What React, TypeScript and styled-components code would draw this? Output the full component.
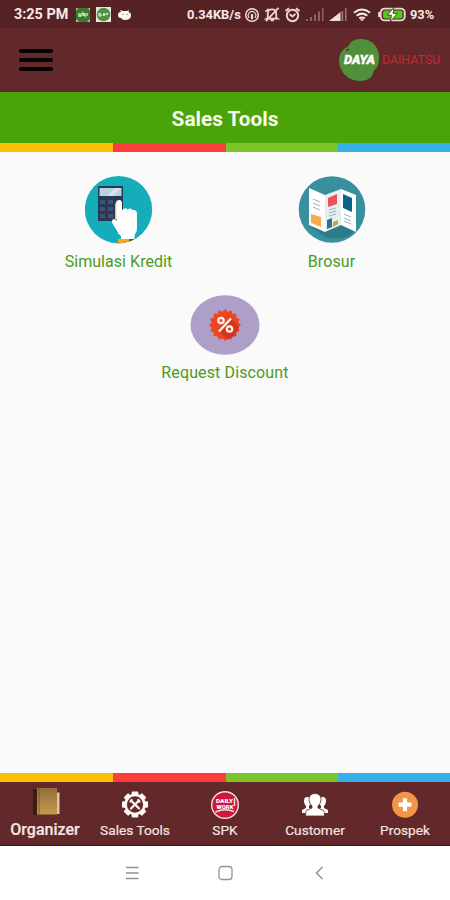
import React from 'react';
import styled, { createGlobalStyle } from 'styled-components';

const GlobalStyle = createGlobalStyle`
  *, *::before, *::after { box-sizing: border-box; }
  body { margin: 0; font-family: Roboto, "Liberation Sans", sans-serif; }
`;

const Screen = styled.div`
  display: flex;
  flex-direction: column;
  width: 450px;
  height: 900px;
  overflow: hidden;
  background: #fafafa;
`;

const StatusBar = styled.header`
  display: flex;
  align-items: center;
  height: 28px;
  padding: 1px 14px 0 14px;
  background: #572224;
  color: #f6e9e6;
`;

const StatusText = styled.span<{ $width: number; $size?: number }>`
  flex: none;
  width: ${(p) => p.$width}px;
  font-size: ${(p) => p.$size ?? 13}px;
  font-weight: 700;
  line-height: 27px;
  white-space: nowrap;
`;

const StatusIcon = styled.svg<{ $gap: number }>`
  flex: none;
  margin-left: ${(p) => p.$gap}px;
`;

const NetworkSpeed = styled(StatusText)`
  margin-left: 55px;
`;

const BatteryLevel = styled(StatusText)`
  margin-left: 4px;
`;

const AppBar = styled.div`
  display: flex;
  align-items: center;
  justify-content: space-between;
  height: 64px;
  padding: 0 9px 0 19px;
  background: #632829;
`;

const MenuButton = styled.button`
  display: flex;
  flex-direction: column;
  gap: 5px;
  width: 34px;
  padding: 0;
  border: 0;
  background: none;
`;

const MenuLine = styled.span`
  height: 4px;
  border-radius: 2px;
  background: #050303;
`;

const TitleBar = styled.h1`
  display: flex;
  align-items: center;
  justify-content: center;
  height: 51px;
  margin: 0;
  padding-top: 2px;
  background: #49a309;
  color: #f7fbe9;
  font-size: 20.8px;
  font-weight: 700;
`;

const Stripe = styled.div`
  display: grid;
  grid-template-columns: 113px 113px 112px 112px;
  flex: none;
  height: 9px;
`;

const StripePart = styled.div<{ $color: string }>`
  background: ${(p) => p.$color};
`;

const Tools = styled.main`
  flex: 1;
  padding: 24px 12px 0;
`;

const ToolRow = styled.div<{ $top?: number }>`
  display: flex;
  justify-content: space-around;
  margin-top: ${(p) => p.$top ?? 0}px;
`;

const Tool = styled.div`
  display: flex;
  flex-direction: column;
  align-items: center;
  width: 213px;
`;

const ToolLabel = styled.span<{ $spacing: number }>`
  margin-top: 8px;
  color: #4b9b1c;
  font-size: 16px;
  line-height: 20px;
  letter-spacing: ${(p) => p.$spacing}px;
  white-space: nowrap;
`;

const TabBar = styled.nav`
  display: grid;
  grid-template-columns: repeat(5, 90px);
  height: 64px;
  border-bottom: 1px solid #3d1416;
  background: #632829;
`;

const Tab = styled.div`
  display: flex;
  flex-direction: column;
  align-items: center;
  padding-top: 5px;
`;

const TabLabel = styled.span<{ $large?: boolean }>`
  margin-top: ${(p) => (p.$large ? 3 : 1)}px;
  color: #f3e5e2;
  font-size: ${(p) => (p.$large ? 16 : 13.7)}px;
  font-weight: ${(p) => (p.$large ? 500 : 400)};
  line-height: 20px;
  white-space: nowrap;
  -webkit-text-stroke: 0.2px #f3e5e2;
`;

const SystemNav = styled.footer`
  display: flex;
  align-items: center;
  justify-content: center;
  gap: 78px;
  height: 54px;
  padding-left: 2px;
  background: #fff;
`;

const stripeColors = ['#fec007', '#fb3d3d', '#7cc42c', '#37b0ea'];

const ColorStripe = () => (
  <Stripe>
    {stripeColors.map((c) => (
      <StripePart key={c} $color={c} />
    ))}
  </Stripe>
);

const StatusIcons = () => (
  <>
    <StatusIcon $gap={0} width="16" height="16" viewBox="0 0 17 16" fill="none" stroke="#ead8d6" strokeWidth="1.6">
      <circle cx="8.5" cy="8" r="6.7" />
      <path d="M5.5 11a4 4 0 1 1 6 0" strokeWidth="1.3" />
      <path d="M8.5 7v5.5" strokeWidth="2.4" />
    </StatusIcon>
    <StatusIcon $gap={4} width="16" height="15" viewBox="0 0 17 16" fill="none" stroke="#ead8d6" strokeWidth="1.9">
      <path d="M4 11.5V7q0-4.5 4.5-4.5T13 7v4.5l1.5 1H2.5zM7 14.3h3.5M15.5 1 2 15" />
      <path d="M1.5 5 5 2" />
    </StatusIcon>
    <StatusIcon $gap={4} width="17" height="16" viewBox="0 0 17 16" fill="none" stroke="#ead8d6" strokeWidth="1.9">
      <circle cx="8.5" cy="8.5" r="5.7" />
      <path d="M1.5 4 5 1.2M12 1.2 15.5 4M5.7 7.2 8.5 9.5l3-2.6" />
    </StatusIcon>
    <StatusIcon $gap={5} width="18" height="14" viewBox="0 0 18 14" fill="#8b6263">
      <path d="M0 11h2v2H0zM4 9h2v4H4zM8 6.5h2V13H8zM12 3.5h2V13h-2zM16 0h1.5v13H16z" />
    </StatusIcon>
    <StatusIcon $gap={5} width="18" height="14" viewBox="0 0 18 14">
      <path d="M0 13 11.5 4v9z" fill="#efdfdc" />
      <path d="M12.5 3h1.7v10h-1.7zM16 0h1.5v13H16z" fill="#9d7778" />
    </StatusIcon>
    <StatusIcon $gap={6} width="18" height="14" viewBox="0 0 18 14" fill="none" stroke="#f6e9e6" strokeWidth="2">
      <path d="M1 4.7q8-6.3 16 0M3.7 7.7q5.3-4.2 10.6 0M6.3 10.4q2.7-2 5.4 0" />
      <path d="m6.8 11.2 2.2 2 2.2-2z" fill="#f6e9e6" stroke="none" />
    </StatusIcon>
    <StatusIcon $gap={7} width="28" height="15" viewBox="0 0 28 15">
      <rect x="2.7" y="1.6" width="24" height="11.8" rx="4" fill="#572224" stroke="#ead8d6" strokeWidth="1.9" />
      <path d="M1.2 5v5" stroke="#ead8d6" strokeWidth="2.2" />
      <rect x="5" y="3.6" width="19.5" height="7.8" rx="2" fill="#4fca18" />
      <path d="M16 0 9.5 8.2h4L12.2 15l7-8.6H15z" fill="#fff" stroke="#572224" strokeWidth=".8" />
    </StatusIcon>
  </>
);

const BrandLogo = () => (
  <svg width="103" height="44" viewBox="338 38 103 44">
    <path d="M350.5 42.5Q354 39 361 39q10 0 15 7.500 3 5 3 11.500 0 9-5 12.500-2 10.500-13 10.500-10 0-16-6-6-6-6-15 0-7 6-12 3-.5 5.500-5.500z" fill="#51903a" />
    <path d="m345.500 51.500 1.500-2.500q1.500-1 2.500 0-.5 1.500-4 2.500z" fill="#632829" />
    <text x="344" y="63.500" fill="#fff" stroke="#fff" strokeWidth=".3" fontFamily="Roboto, sans-serif" fontSize="12" fontWeight="900" fontStyle="italic" textLength="31" lengthAdjust="spacingAndGlyphs">DAYA</text>
    <text x="382" y="63.500" fill="#cf2434" fontFamily="Roboto, sans-serif" fontSize="12" fontWeight="400" textLength="58" lengthAdjust="spacingAndGlyphs">DAIHATSU</text>
  </svg>
);

const CreditIcon = () => (
  <svg width="68" height="68" viewBox="0 0 68 68">
    <defs><clipPath id="creditDisc"><circle cx="33.5" cy="33.7" r="33.7" /></clipPath></defs>
    <circle cx="33.5" cy="33.7" r="33.7" fill="#14adb9" />
    <path d="M13 10h25v35H13z" fill="#273a55" />
    <path d="M14.500 12h22v8h-22z" fill="#b7d2e3" />
    <path d="m22 20 8-8h6l-8 8z" fill="#d4e5ed" />
    <path d="M15 24h5v4h-5zM23 24h5v4h-5zM31 24h5v4h-5zM15 31h5v4h-5zM23 31h5v4h-5zM15 38h5v4h-5zM23 38h5v4h-5z" fill="#405471" />
    <path d="M30 29q1-5 4-4v18h-4z" fill="#f2cc83" />
    <path d="M31.500 27.500q0-3.500 2.800-3.500t2.700 3.500V34q3-3 5.500-.5 3-2 5 .5 4.500-.5 4.500 3.500V52q0 4-2 6l-1 6H36v-4q-3-2-4.500-6l-4-6.500q-1.500-4 1.500-4.500 1.500 0 2.500 2z" fill="#fffefe" />
    <path d="M42.300 34v4m5-3.500v4" stroke="#dcebed" strokeWidth=".8" />
    <g clipPath="url(#creditDisc)">
      <path d="M33 63h19v6H33z" fill="#f5a52c" />
      <path d="M44 63h5v5h-5z" fill="#5f5145" />
    </g>
  </svg>
);

const BrochureIcon = () => (
  <svg width="68" height="68" viewBox="0 0 68 68">
    <circle cx="34" cy="33.500" r="33.300" fill="#38909f" />
    <path d="m12 50 15 11q22 5 31-8V20z" fill="#2b7c8b" />
    <path d="m11 12 16 7v37l-16-7z" fill="#fff" />
    <path d="m27 19 16-6v36l-16 7z" fill="#e4eff3" />
    <path d="m43 13 15 6v37l-15-7z" fill="#fff" />
    <path d="m13 38 10 3v10l-10-4z" fill="#fba944" />
    <path d="m30 22 9-4v10l-9 3z" fill="#eb5258" />
    <path d="m45 18 9 4v14l-9-4z" fill="#07638a" />
    <path d="m29 44 5-2v9l-5 2z" fill="#29758b" />
    <path d="m35 46 5-2v4l-5 3z" fill="#c1aa34" />
    <path d="m15 23 7 3m-7 1 7 3m-7 1 7 3M31 34l7-2m-7 5 7-2m-7 5 7-2M46 38l7 3m-7 1 7 3m-7 0 7 3" fill="none" stroke="#a3aeba" strokeWidth="1" />
  </svg>
);

const discountSeal = Array.from({ length: 32 }, (_, i) => {
  const r = i % 2 ? 13.5 : 16;
  const a = (i * Math.PI) / 16;
  return `${35 + Math.cos(a) * r},${30 + Math.sin(a) * r}`;
}).join(' ');

const DiscountIcon = () => (
  <svg width="70" height="60" viewBox="0 0 70 60">
    <ellipse cx="35" cy="30" rx="34.5" ry="29.7" fill="#ad9fc8" />
    <polygon points={discountSeal} fill="#ee4523" />
    <path d="m42 24 7 8-4 9-8 4-7-8z" fill="#c6301b" opacity=".65" />
    <g fill="none" stroke="#fff5e7" strokeWidth="2.2">
      <circle cx="31" cy="25.500" r="2.700" />
      <circle cx="39.500" cy="34" r="2.700" />
      <path d="m29 36.500 12-13" />
    </g>
  </svg>
);

const NotebookIcon = () => (
  <svg width="30" height="30" viewBox="0 0 30 30">
    <defs><linearGradient id="leather" x1="0" y1="0" x2="0" y2="1"><stop stopColor="#927039" /><stop offset="1" stopColor="#c49a4c" /></linearGradient></defs>
    <path d="M3 2h5v26H3z" fill="#3a1d17" />
    <path d="M25 5.500h4.500V27H25z" fill="#d9c7aa" />
    <path d="M7 1h20v26.500H7z" fill="url(#leather)" />
    <path d="M9 1v26" stroke="#7c5b2d" />
  </svg>
);

const gearTeeth = Array.from({ length: 8 }, (_, i) => i * 45);

const ToolsIcon = () => (
  <svg width="30" height="32" viewBox="0 0 30 32">
    <g transform="translate(15 17.5)">
      {gearTeeth.map((angle) => (
        <rect key={angle} x="-3.3" y="-13" width="6.600" height="5" rx="1" fill="#fff8f4" transform={`rotate(${angle})`} />
      ))}
      <circle r="9.400" fill="#632829" stroke="#fff8f4" strokeWidth="2.500" />
      <path d="m-4 4 8-8M-4-4l8 8" stroke="#fff8f4" strokeWidth="2.300" strokeLinecap="round" />
      <path d="M-5.500-3q2 1 2.500-2.500M3-5.500Q3-2 5.500-3" fill="none" stroke="#fff8f4" strokeWidth="1.400" />
    </g>
  </svg>
);

const SpkIcon = () => (
  <svg width="30" height="32" viewBox="0 0 30 32">
    <circle cx="15" cy="18" r="13.3" fill="#cd1838" stroke="#eee0df" strokeWidth="1.4" />
    <path d="M5.500 25q9-4 18.500-.5M24.500 11v8" fill="none" stroke="#f5dce0" strokeWidth="1.500" />
    <g fill="#fff" fontFamily="Roboto, sans-serif" fontWeight="900" fontSize="5" textAnchor="middle">
      <text x="14.500" y="16" textLength="17" lengthAdjust="spacingAndGlyphs">DAILY</text>
      <text x="15" y="22.300" textLength="17" lengthAdjust="spacingAndGlyphs">WORK</text>
    </g>
  </svg>
);

const CustomerIcon = () => (
  <svg width="30" height="32" viewBox="0 0 30 32" fill="#fff">
    <path d="M7 10q4 0 4 4 0 3-2 5v2l2 1-3 4H2v-3l4-2v-2q-2-2-2-5 0-4 3-4M23 10q-4 0-4 4 0 3 2 5v2l-2 1 3 4h6v-3l-4-2v-2q2-2 2-5 0-4-3-4" />
    <path d="M15 6.500q6 0 6 6 0 4-3 6.500v2l5.500 2.500q1 1 1 5.500h-19q0-4.500 1-5.500L12 21v-2q-3-2.500-3-6.500 0-6 6-6" stroke="#632829" strokeWidth=".8" />
  </svg>
);

const ProspectIcon = () => (
  <svg width="30" height="32" viewBox="0 0 30 32">
    <circle cx="15" cy="17.700" r="13" fill="#f29549" />
    <path d="M15 11.200v13M8.500 17.700h13" stroke="#fff" strokeWidth="4.200" />
  </svg>
);

export default function App() {
  return (
    <>
      <GlobalStyle />
      <Screen>
        <StatusBar>
          <StatusText $width={55} $size={14.4}>3:25 PM</StatusText>
          <StatusIcon $gap={7} width="14" height="14" viewBox="0 0 14 14">
            <path d="M0 0h14v14H0z" fill="#b8c1a4" />
            <path d="M2 0h10l2 3v8l-3 3H3l-3-3V3z" fill="#397d2b" />
            <path d="M3 5v3h2V5m2 3V5l2 3V5m2 0v3" stroke="#d9e6cf" fill="none" strokeWidth="1.3" />
          </StatusIcon>
          <StatusIcon $gap={6} width="15" height="15" viewBox="0 0 15 15">
            <path d="M0 0h15v15H0z" fill="#e3e7da" />
            <circle cx="7.5" cy="7.5" r="6.8" fill="#519044" />
            <path d="M3 9V6l2 1v2H3m4 0 1-3 1 3m1-3 1 2 1-2" stroke="#eef5e6" fill="none" />
          </StatusIcon>
          <StatusIcon $gap={7} width="14" height="12" viewBox="0 0 14 12">
            <path d="M3 3 2 1l3 1h4l2-1-.5 2q3 1 2.500 4-.5 4-6 4-3 0-4-2Q0 9 0 6t3-3" fill="#fff6f1" />
            <path d="M4 5.500h1.500m3 0H10" stroke="#a99490" />
          </StatusIcon>
          <NetworkSpeed $width={57} $size={12.9}>0.34KB/s</NetworkSpeed>
          <StatusIcons />
          <BatteryLevel $width={26} $size={12.8}>93%</BatteryLevel>
        </StatusBar>
        <AppBar>
          <MenuButton aria-label="Menu"><MenuLine /><MenuLine /><MenuLine /></MenuButton>
          <BrandLogo />
        </AppBar>
        <TitleBar>Sales Tools</TitleBar>
        <ColorStripe />
        <Tools>
          <ToolRow>
            <Tool><CreditIcon /><ToolLabel $spacing={0.05}>Simulasi Kredit</ToolLabel></Tool>
            <Tool><BrochureIcon /><ToolLabel $spacing={0.1}>Brosur</ToolLabel></Tool>
          </ToolRow>
          <ToolRow $top={23}>
            <Tool><DiscountIcon /><ToolLabel $spacing={0.13}>Request Discount</ToolLabel></Tool>
          </ToolRow>
        </Tools>
        <ColorStripe />
        <TabBar>
          <Tab><NotebookIcon /><TabLabel $large>Organizer</TabLabel></Tab>
          <Tab><ToolsIcon /><TabLabel>Sales Tools</TabLabel></Tab>
          <Tab><SpkIcon /><TabLabel>SPK</TabLabel></Tab>
          <Tab><CustomerIcon /><TabLabel>Customer</TabLabel></Tab>
          <Tab><ProspectIcon /><TabLabel>Prospek</TabLabel></Tab>
        </TabBar>
        <SystemNav>
          <svg width="16" height="16" viewBox="0 0 16 16" fill="none" stroke="#929292" strokeWidth="1.3"><path d="M2 2.500h12.500M2 8h12.500M2 13.500h12.500" /></svg>
          <svg width="16" height="16" viewBox="0 0 16 16" fill="none" stroke="#929292" strokeWidth="1.3"><rect x="1" y="1.500" width="13" height="13" rx="3" /></svg>
          <svg width="16" height="16" viewBox="0 0 16 16" fill="none" stroke="#929292" strokeWidth="1.5"><path d="m10.500 2-6 6 6 6" /></svg>
        </SystemNav>
      </Screen>
    </>
  );
}
